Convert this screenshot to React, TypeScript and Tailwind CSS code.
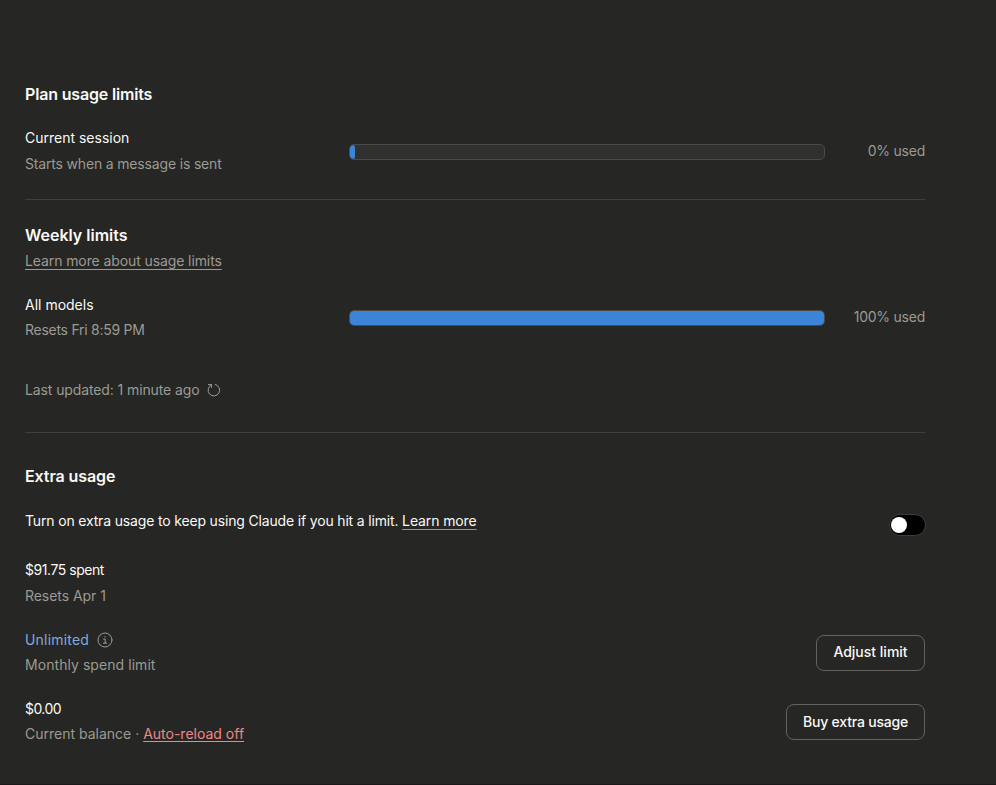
import React from 'react';

interface UsageBarProps {
  title: string;
  detail: string;
  percent: number;
  titleClass?: string;
  detailClass?: string;
}

const UsageBar: React.FC<UsageBarProps> = ({ title, detail, percent, titleClass = 'h-[25px]', detailClass = '' }) => (
  <div className="flex items-center">
    <div className="w-[324px] shrink-0">
      <p className={`text-[#faf9f5] ${titleClass}`}>{title}</p>
      <p className={`h-5 ${detailClass}`}>{detail}</p>
    </div>
    <div className="mt-px h-4 w-[476px] shrink-0 overflow-hidden rounded-[5px] border border-[#4a4a47] bg-[#30302e]">
      <div
        className="h-full min-w-[5px] rounded-[3px] bg-[#3c84d8]"
        style={{ width: `${percent}%` }}
      />
    </div>
    <p className="-mt-px flex-1 text-right tracking-[-0.24px]">{percent}% used</p>
  </div>
);

const RefreshIcon = () => (
  <svg width="14" height="14" viewBox="0 0 14 14" fill="none" stroke="currentColor" strokeLinecap="round" strokeLinejoin="round">
    <path d="M1.4 1.6h3v3" />
    <path d="M4.4 1.8A5.8 5.8 0 1 0 8.2 1.4" />
  </svg>
);

const InfoIcon = () => (
  <svg width="16" height="16" viewBox="0 0 16 16" fill="none" stroke="currentColor" strokeLinecap="round" strokeLinejoin="round">
    <circle cx="8" cy="8" r="7" />
    <path d="M6.6 7.2h1.6v3.9M6.4 11.1h3.4" />
    <circle cx="8" cy="4.9" r="0.7" fill="currentColor" stroke="none" />
  </svg>
);

const App: React.FC = () => {
  return (
    <div className="h-[785px] w-[996px] overflow-hidden border-b border-[#1b191a] bg-[#262624] pt-[82px] pl-[25px] font-['Inter',sans-serif] text-sm text-[#9c9a92]">
      <div className="w-[900px] whitespace-nowrap">
        <section className="h-[118px] border-b border-[#3f3f3c]">
          <h2 className="mb-[22px] text-base leading-6 font-semibold tracking-[-0.17px] text-[#faf9f5]">Plan usage limits</h2>
          <UsageBar
            title="Current session"
            detail="Starts when a message is sent"
            percent={0}
            titleClass="h-[26px]"
            detailClass="tracking-[-0.17px]"
          />
        </section>

        <section className="h-[233px] border-b border-[#3f3f3c] pt-[23px]">
          <h2 className="text-base leading-6 font-semibold text-[#faf9f5]">Weekly limits</h2>
          <div className="mt-1 mb-6 h-5">
            <a href="#" className="tracking-[-0.1px] underline underline-offset-3">Learn more about usage limits</a>
          </div>
          <UsageBar title="All models" detail="Resets Fri 8:59 PM" percent={100} detailClass="tracking-[-0.27px]" />
          <div className="mt-10 flex items-center gap-2">
            <span className="tracking-[-0.11px]">Last updated: 1 minute ago</span>
            <RefreshIcon />
          </div>
        </section>

        <section className="pt-[31px]">
          <h2 className="text-base leading-6 font-semibold tracking-[-0.1px] text-[#faf9f5]">Extra usage</h2>

          <div className="mt-[23px] flex h-[26px] justify-between">
            <p className="tracking-[-0.165px] text-[#faf9f5]">
              Turn on extra usage to keep using Claude if you hit a limit.{' '}
              <a href="#" className="tracking-[-0.12px] underline decoration-[#9c9a92] underline-offset-3">Learn more</a>
            </p>
            <button role="switch" aria-checked="false" aria-label="Extra usage" className="mt-[3px] -mr-px flex h-[22px] w-[37px] items-center rounded-full border border-[#3c3c3a] bg-black pl-px">
              <span className="size-4 rounded-full bg-white" />
            </button>
          </div>

          <div className="mt-[23px]">
            <p className="h-[26px] tracking-[-0.45px] text-[#faf9f5]">$91.75 spent</p>
            <p className="tracking-[-0.05px]">Resets Apr 1</p>
          </div>

          <div className="mt-6 flex items-center justify-between">
            <div>
              <div className="flex h-[25px] gap-2">
                <span className="tracking-[0.2px] text-[#80aadd]">Unlimited</span>
                <span className="pt-0.5"><InfoIcon /></span>
              </div>
              <p className="tracking-[0.06px]">Monthly spend limit</p>
            </div>
            <button className="h-9 w-[109px] rounded-lg border border-[#62625f] pb-0.5 font-medium text-[#faf9f5]">Adjust limit</button>
          </div>

          <div className="mt-6 flex items-center justify-between">
            <div>
              <p className="h-[25px] tracking-[-0.55px] text-[#faf9f5]">$0.00</p>
              <p>
                Current balance · <a href="#" className="text-[#ee8884] underline underline-offset-2">Auto-reload off</a>
              </p>
            </div>
            <button className="h-9 w-[139px] rounded-lg border border-[#62625f] font-medium tracking-[-0.2px] text-[#faf9f5]">Buy extra usage</button>
          </div>
        </section>
      </div>
    </div>
  );
};

export default App;
